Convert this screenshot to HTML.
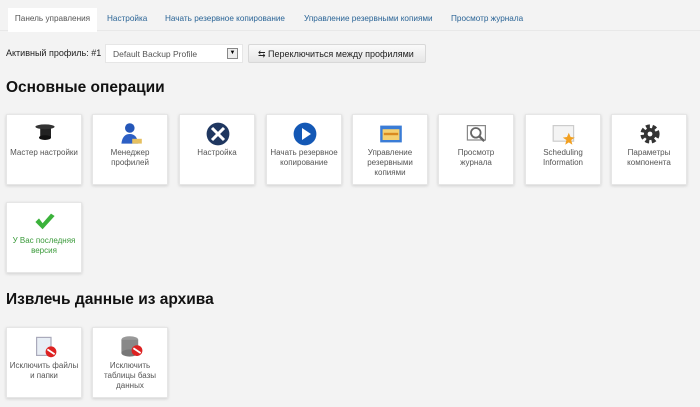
<!DOCTYPE html>
<html><head><meta charset="utf-8"><style>
*{margin:0;padding:0;box-sizing:border-box}
body{width:700px;height:407px;background:#f3f3f3;font-family:"Liberation Sans",sans-serif;position:relative;overflow:hidden;color:#333}
.tabs{position:absolute;left:0;top:0;width:700px;height:31px;border-bottom:1px solid #e8e8e8}
.tab{position:absolute;top:14px;font-size:8.2px;color:#2a6496}
.tab.act{top:8px;height:24px;left:8px;width:89px;background:#fff;color:#555;padding-top:6px;text-align:center}
.lbl{position:absolute;left:6px;top:48px;font-size:9px;color:#222}
.sel{position:absolute;left:105px;top:44px;width:138px;height:19px;background:#fff;border:1px solid #e6e6e6;font-size:8.5px;color:#555;padding:4px 0 0 7px}
.sel i{position:absolute;right:4px;top:3px;width:11px;height:11px;border:1px solid #888;background:#eee;font-size:6px;line-height:9px;text-align:center;font-style:normal;color:#000}
.btn{position:absolute;left:248px;top:44px;width:178px;height:19px;background:linear-gradient(#fafafa,#e6e6e6);border:1px solid #d8d8d8;border-radius:2px;font-size:9px;color:#222;padding:4px 0 0 9px}
h2{position:absolute;left:6px;font-size:15.5px;font-weight:bold;color:#111}
.t{position:absolute;width:76px;height:71px;background:#fff;border:1px solid #e6e6e6;box-shadow:0 1px 3px rgba(0,0,0,.15);text-align:center;font-size:8px;line-height:10px;color:#555;padding-top:33px}
.t .ic{position:absolute;left:26px;top:7px;width:24px;height:24px}
</style></head><body>
<div class="tabs">
<div class="tab act">Панель управления</div>
<div class="tab" style="left:107px">Настройка</div>
<div class="tab" style="left:165px">Начать резервное копирование</div>
<div class="tab" style="left:304px">Управление резервными копиями</div>
<div class="tab" style="left:451px">Просмотр журнала</div>
</div>
<div class="lbl">Активный профиль: #1</div>
<div class="sel">Default Backup Profile<i>▼</i></div>
<div class="btn">⇆ Переключиться между профилями</div>
<h2 style="top:79px">Основные операции</h2>

<div class="t" style="left:6px;top:114px"><svg class="ic" viewBox="0 0 20 20"><rect x="6" y="3" width="9" height="10" fill="#222"/><ellipse cx="10" cy="4" rx="8" ry="2" fill="#333"/><ellipse cx="10" cy="13" rx="5" ry="2" fill="#111"/></svg>Мастер настройки</div>
<div class="t" style="left:92px;top:114px"><svg class="ic" viewBox="0 0 20 20"><circle cx="9" cy="5" r="4" fill="#2456b8"/><path d="M2 18 Q3 10 9 10 Q15 10 16 18Z" fill="#2d5fc4"/><rect x="11" y="14" width="8" height="4" fill="#e6c060"/></svg>Менеджер<br>профилей</div>
<div class="t" style="left:179px;top:114px"><svg class="ic" viewBox="0 0 20 20"><circle cx="10" cy="10" r="9.5" fill="#1f3760"/><path d="M5 5 L15 15 M15 5 L5 15" stroke="#fff" stroke-width="2.5"/></svg>Настройка</div>
<div class="t" style="left:266px;top:114px"><svg class="ic" viewBox="0 0 20 20"><circle cx="10" cy="10" r="9.5" fill="#1458b5"/><path d="M7.5 5 L15 10 L7.5 15Z" fill="#fff"/></svg>Начать резервное<br>копирование</div>
<div class="t" style="left:352px;top:114px"><svg class="ic" viewBox="0 0 20 20"><rect x="1" y="3" width="18" height="14" fill="#3a7cd6"/><rect x="3" y="6" width="14" height="9" fill="#f4d070"/><rect x="4" y="9" width="12" height="2" fill="#d98a20"/></svg>Управление<br>резервными<br>копиями</div>
<div class="t" style="left:438px;top:114px"><svg class="ic" viewBox="0 0 20 20"><rect x="2" y="3" width="15" height="12" fill="#fff" stroke="#888"/><circle cx="9" cy="9" r="4" fill="none" stroke="#666" stroke-width="1.5"/><path d="M12 12 L16 16" stroke="#666" stroke-width="2"/></svg>Просмотр<br>журнала</div>
<div class="t" style="left:525px;top:114px"><svg class="ic" viewBox="0 0 20 20"><rect x="1" y="3" width="17" height="13" fill="#f4f4f4" stroke="#ccc"/><path d="M14 9 L15.5 12.5 L19 13 L16 15 L17 19 L14 17 L11 19 L12 15 L9 13 L12.5 12.5Z" fill="#f2a020"/></svg>Scheduling<br>Information</div>
<div class="t" style="left:611px;top:114px"><svg class="ic" viewBox="0 0 20 20"><circle cx="10" cy="10" r="6" fill="none" stroke="#333" stroke-width="4" stroke-dasharray="3 2"/><circle cx="10" cy="10" r="5" fill="#333"/><circle cx="10" cy="10" r="2" fill="#fff"/></svg>Параметры<br>компонента</div>
<div class="t" style="left:6px;top:202px;color:#3a9a3a"><svg class="ic" viewBox="0 0 20 20"><path d="M2 10 L8 16 L18 5 L15 3 L8 11 L5 7Z" fill="#3bb23b"/></svg>У Вас последняя<br>версия</div>

<h2 style="top:291px">Извлечь данные из архива</h2>
<div class="t" style="left:6px;top:327px"><svg class="ic" viewBox="0 0 20 20"><rect x="3" y="2" width="12" height="15" fill="#e8eef5" stroke="#aab"/><circle cx="15" cy="14" r="4.5" fill="#d22"/><path d="M12 12 L18 16" stroke="#fff" stroke-width="1.5"/></svg>Исключить файлы<br>и папки</div>
<div class="t" style="left:92px;top:327px"><svg class="ic" viewBox="0 0 20 20"><ellipse cx="9" cy="4" rx="7" ry="3" fill="#999"/><rect x="2" y="4" width="14" height="11" fill="#888"/><ellipse cx="9" cy="15" rx="7" ry="3" fill="#777"/><circle cx="15" cy="13" r="4.5" fill="#d22"/><path d="M12 11 L18 15" stroke="#fff" stroke-width="1.5"/></svg>Исключить<br>таблицы базы<br>данных</div>
</body></html>
